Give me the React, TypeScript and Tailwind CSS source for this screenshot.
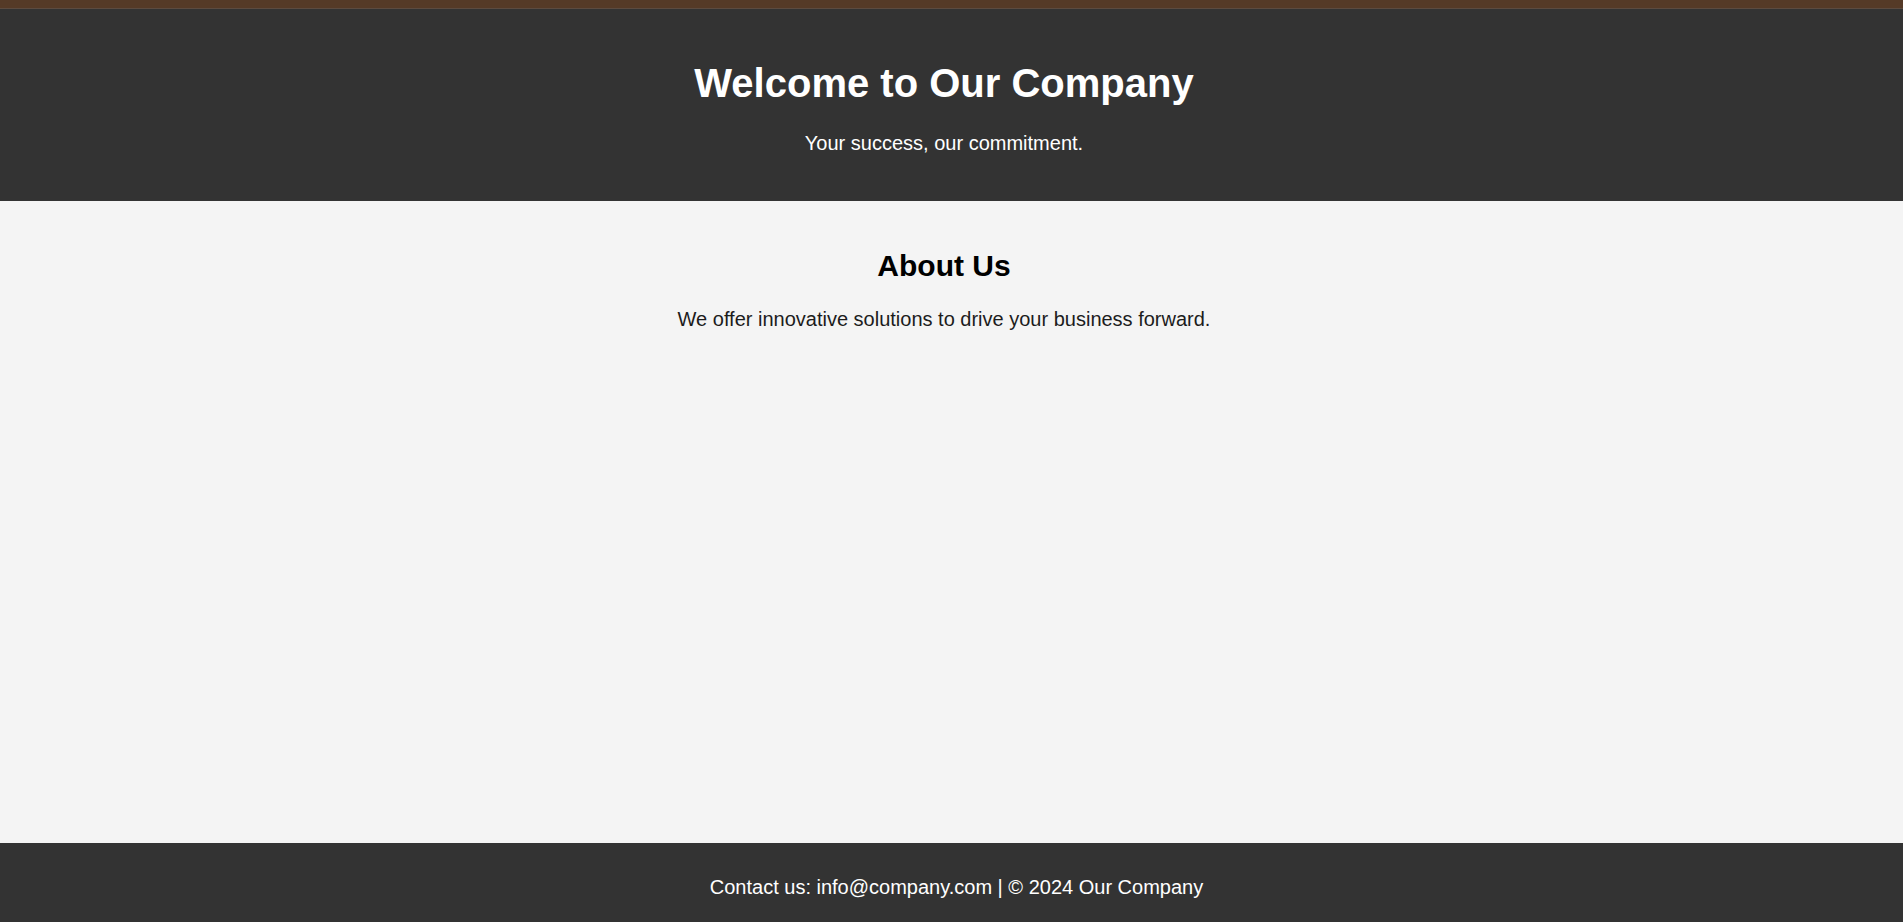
export default function App() {
  return (
    <div className="min-h-screen flex flex-col bg-[#f4f4f4]" style={{ fontFamily: "'Liberation Sans', Arial, sans-serif" }}>
      {/* top stripe */}
      <div className="h-[9px] bg-[#553a27] border-b border-[#5c4b40]" />

      <header className="bg-[#333333] text-white text-center pt-[51px] pb-[46px] pr-[15px]">
        <h1 className="text-[40px] font-bold leading-[46px]">Welcome to Our Company</h1>
        <p className="text-[20px] leading-[23px] mt-[26px]">Your success, our commitment.</p>
      </header>

      <main className="flex-1 text-center pt-[47px] pb-10 pr-[15px]">
        <h2 className="text-[30px] font-bold leading-[35px] text-black">About Us</h2>
        <p className="text-[20px] leading-[23px] mt-[25px] text-[#1c1c1c]">
          We offer innovative solutions to drive your business forward.
        </p>
      </main>

      <footer className="bg-[#333333] text-white text-center pt-[33px] pb-[23px] pl-[10px]">
        <p className="text-[20px] leading-[23px]">Contact us: info@company.com | © 2024 Our Company</p>
      </footer>
    </div>
  );
}
